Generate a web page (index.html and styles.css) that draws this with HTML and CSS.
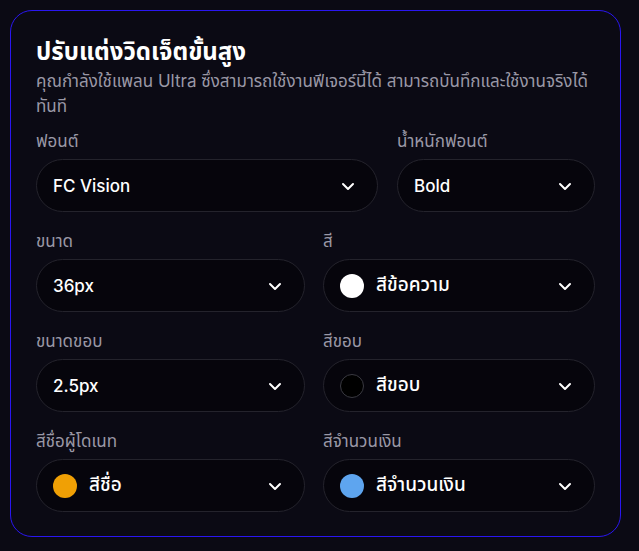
FILE: index.html
```html
<!DOCTYPE html>
<html lang="th">
<head>
  <meta charset="UTF-8" />
  <meta name="viewport" content="width=device-width, initial-scale=1.0"/>
  <title>ปรับแต่งวิดเจ็ตขั้นสูง</title>
  <link rel="stylesheet" href="styles.css">
</head>
<body>
  <div class="card">
    <h2 class="title">ปรับแต่งวิดเจ็ตขั้นสูง</h2>
    <p class="desc">คุณกำลังใช้แพลน Ultra ซึ่งสามารถใช้งานฟีเจอร์นี้ได้ สามารถบันทึกและใช้งานจริงได้ทันที</p>

    <div class="row row-font">
      <div class="field">
        <label>ฟอนต์</label>
        <div class="select"><span class="value">FC Vision</span><svg class="chev" viewBox="0 0 16 16"><path d="M3 6l5 5 5-5"/></svg></div>
      </div>
      <div class="field">
        <label>น้ำหนักฟอนต์</label>
        <div class="select"><span class="value">Bold</span><svg class="chev" viewBox="0 0 16 16"><path d="M3 6l5 5 5-5"/></svg></div>
      </div>
    </div>

    <div class="row">
      <div class="field">
        <label>ขนาด</label>
        <div class="select"><span class="value">36px</span><svg class="chev" viewBox="0 0 16 16"><path d="M3 6l5 5 5-5"/></svg></div>
      </div>
      <div class="field">
        <label>สี</label>
        <div class="select"><span class="dot dot-white"></span><span class="value th">สีข้อความ</span><svg class="chev" viewBox="0 0 16 16"><path d="M3 6l5 5 5-5"/></svg></div>
      </div>
    </div>

    <div class="row">
      <div class="field">
        <label>ขนาดขอบ</label>
        <div class="select"><span class="value">2.5px</span><svg class="chev" viewBox="0 0 16 16"><path d="M3 6l5 5 5-5"/></svg></div>
      </div>
      <div class="field">
        <label>สีขอบ</label>
        <div class="select"><span class="dot dot-black"></span><span class="value th">สีขอบ</span><svg class="chev" viewBox="0 0 16 16"><path d="M3 6l5 5 5-5"/></svg></div>
      </div>
    </div>

    <div class="row">
      <div class="field">
        <label>สีชื่อผู้โดเนท</label>
        <div class="select"><span class="dot dot-orange"></span><span class="value th">สีชื่อ</span><svg class="chev" viewBox="0 0 16 16"><path d="M3 6l5 5 5-5"/></svg></div>
      </div>
      <div class="field">
        <label>สีจำนวนเงิน</label>
        <div class="select"><span class="dot dot-blue"></span><span class="value th">สีจำนวนเงิน</span><svg class="chev" viewBox="0 0 16 16"><path d="M3 6l5 5 5-5"/></svg></div>
      </div>
    </div>
  </div>
</body>
</html>
```

FILE: styles.css
```css
* { margin: 0; padding: 0; box-sizing: border-box; }
body {
  font-family: 'Inter', 'Noto Sans Thai', 'Noto Sans', sans-serif;
  background: #0b0a14;
  padding: 10px 18px 14px 10px;
  color: #fff;
}
.card {
  width: 611px;
  border: 1px solid #2a16f0;
  border-radius: 22px;
  padding: 24px 25px 24px 25px;
  background: #0b0a14;
}
.title {
  font-size: 24px;
  font-weight: 700;
  line-height: 34px;
  color: #fff;
}
.desc {
  font-size: 17px;
  line-height: 25px;
  color: #9a98a6;
  margin-bottom: 11px;
}
.row {
  display: grid;
  grid-template-columns: 269px 1fr;
  gap: 18px;
  margin-bottom: 18px;
}
.row:last-child { margin-bottom: 0; }
.row-font {
  grid-template-columns: 1fr 198px;
  gap: 19px;
}
.field label {
  display: block;
  font-size: 17px;
  line-height: 22px;
  color: #9a98a6;
  margin-bottom: 7px;
}
.select {
  height: 53px;
  border: 1px solid #24232c;
  border-radius: 27px;
  background: #06050c;
  display: flex;
  align-items: center;
  padding: 0 21px 0 16px;
}
.value {
  flex: 1;
  font-size: 17px;
  font-weight: 500;
  color: #fff;
}
.value.th { font-size: 19px; }
.chev {
  width: 16px;
  height: 16px;
  fill: none;
  stroke: #fff;
  stroke-width: 2;
  stroke-linecap: round;
  stroke-linejoin: round;
}
.dot {
  width: 24px;
  height: 24px;
  border-radius: 50%;
  margin-right: 12px;
}
.dot-white { background: #fff; }
.dot-black { background: #000; border: 1px solid #3a3a42; }
.dot-orange { background: #f0a005; }
.dot-blue { background: #5ea5ef; }
```
